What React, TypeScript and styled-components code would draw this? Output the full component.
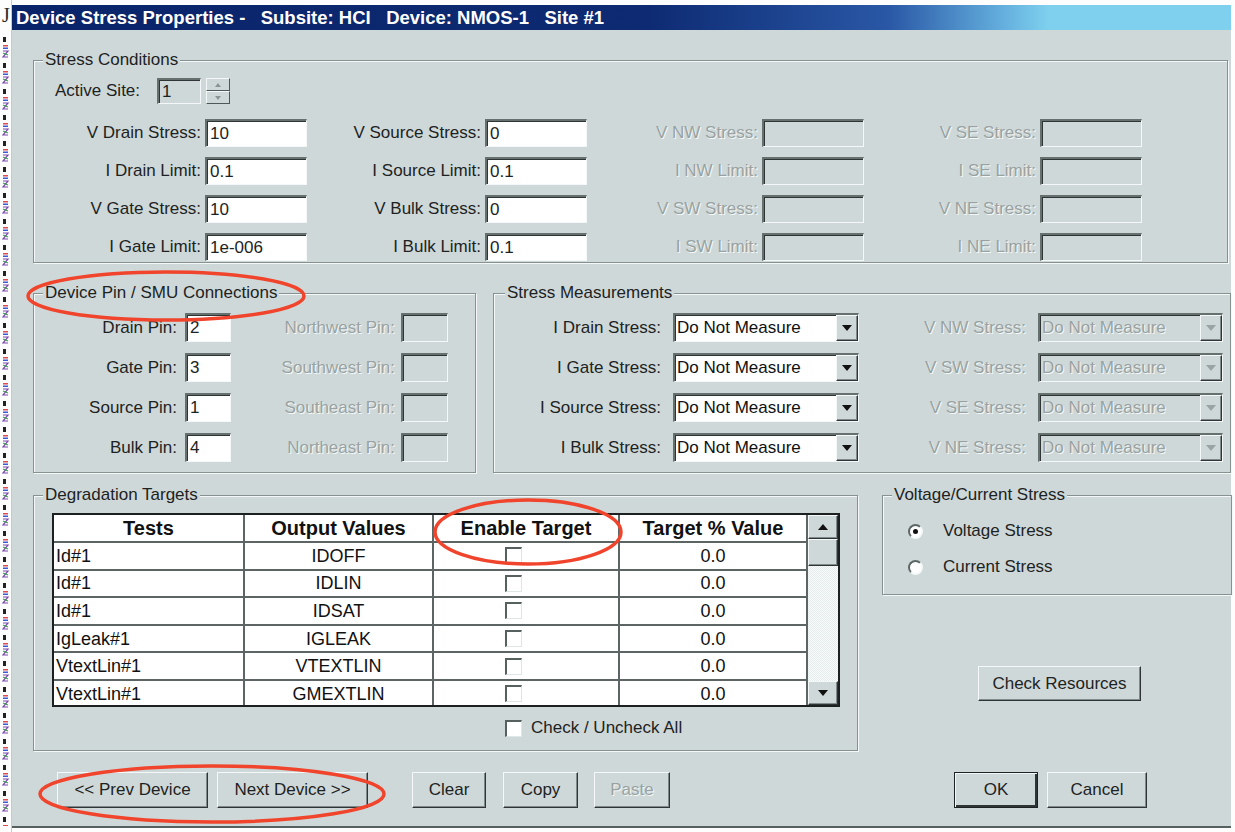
import React from 'react'
import styled, { createGlobalStyle } from 'styled-components'

const FACE = '#cfd8d8'
const TEXT = '#1d2323'
const GREY = '#98a2a2'
const LIGHT = '#f4f8f8'
const DARK = '#4f5858'

const GlobalStyle = createGlobalStyle`
  html, body { margin: 0; padding: 0; background: #fdfdfd; }
  body { font-family: "Liberation Sans", Arial, sans-serif; color: ${TEXT}; }
  * { box-sizing: border-box; }
`

const Page = styled.div`
  position: relative;
  display: flex;
  width: 1235px;
  height: 832px;
  overflow: hidden;
  background: #fdfdfd;
`

const Strip = styled.div`
  width: 12px;
  flex: none;
  display: flex;
  flex-direction: column;
  border-right: 1px solid #c3cbcb;
`

const StripGlyph = styled.div`
  height: 36px;
  padding: 3px 0 0 2px;
  font: 20px "Liberation Serif", serif;
  line-height: 24px;
  color: #2a2a2a;
`

const Window = styled.div`
  width: 1219px;
  height: 823px;
  margin-top: 5px;
  display: flex;
  flex-direction: column;
  border-bottom: 2px solid #56605f;
`

const TitleBar = styled.div`
  height: 25px;
  flex: none;
  padding-left: 4px;
  background: linear-gradient(90deg, #0a246a 0%, #0d2a72 52%, #2a58a6 72%, #62acdc 81%, #7ed0ee 85%, #7ed0ee 100%);
  color: #fff;
  font: bold 18.5px "Liberation Sans", Arial, sans-serif;
  line-height: 25px;
  white-space: pre;
`

const Body = styled.div`
  flex: 1;
  display: flex;
  flex-direction: column;
  padding: 30px 0 0 21px;
  background: ${FACE};
`

const Row = styled.div<{ $top?: number; $gap?: number }>`
  display: flex;
  align-items: flex-start;
  margin-top: ${p => p.$top ?? 0}px;
  gap: ${p => p.$gap ?? 0}px;
`

const Column = styled.div`
  display: flex;
  flex-direction: column;
  align-items: flex-start;
`

const Group = styled.div<{ $w: number; $h: number }>`
  width: ${p => p.$w}px;
  height: ${p => p.$h}px;
  flex: none;
  display: flex;
  flex-direction: column;
  align-items: flex-start;
  border: 1px solid #86928f;
  box-shadow: inset 1px 1px 0 ${LIGHT}, 1px 1px 0 ${LIGHT};
`

const Caption = styled.div<{ $x?: number }>`
  margin: -10px 0 0 ${p => p.$x ?? 9}px;
  padding: 0 2px;
  background: ${FACE};
  font-size: 17px;
  line-height: 18px;
  white-space: nowrap;
`

const Label = styled.div<{ $disabled?: boolean; $pad?: number }>`
  display: flex;
  align-items: center;
  justify-content: flex-end;
  height: 100%;
  padding-right: ${p => p.$pad ?? 0}px;
  font-size: 17px;
  white-space: nowrap;
  color: ${p => (p.$disabled ? GREY : TEXT)};
  text-shadow: ${p => (p.$disabled ? `1px 1px 0 ${LIGHT}` : 'none')};
`

const TextBox = styled.div<{ $disabled?: boolean; $w?: number }>`
  width: ${p => (p.$w ? `${p.$w}px` : '100%')};
  height: 100%;
  display: flex;
  align-items: center;
  padding-left: 3px;
  background: ${p => (p.$disabled ? FACE : '#fff')};
  border-style: solid;
  border-width: 2px 1px 1px 2px;
  border-color: #66706f ${LIGHT} ${LIGHT} #66706f;
  box-shadow: inset 1px 1px 0 #2f3535;
  font-size: 17px;
`

const FieldGrid = styled.div<{ $cols: string; $row: number; $gap: number; $left: number; $top: number; $colGap?: number }>`
  display: grid;
  grid-template-columns: ${p => p.$cols};
  grid-auto-rows: ${p => p.$row}px;
  row-gap: ${p => p.$gap}px;
  column-gap: ${p => p.$colGap ?? 0}px;
  margin: ${p => p.$top}px 0 0 ${p => p.$left}px;
`

const SiteRow = styled.div`
  display: flex;
  align-items: center;
  height: 26px;
  margin: 9px 0 0 21px;
`

const SiteLabel = styled.div`
  width: 102px;
  font-size: 17px;
`

const Spinner = styled.div`
  display: flex;
  flex-direction: column;
  margin-left: 5px;
  height: 26px;
`

const SpinHalf = styled.div`
  width: 24px;
  height: 13px;
  display: flex;
  align-items: center;
  justify-content: center;
  background: ${FACE};
  border: 1px solid;
  border-color: ${LIGHT} ${DARK} ${DARK} ${LIGHT};
`

const SelectBox = styled.div<{ $disabled?: boolean }>`
  height: 100%;
  display: flex;
  align-items: center;
  justify-content: space-between;
  padding-left: 2px;
  background: ${p => (p.$disabled ? FACE : '#fff')};
  border-style: solid;
  border-width: 2px 1px 1px 2px;
  border-color: #66706f ${LIGHT} ${LIGHT} #66706f;
  box-shadow: inset 1px 1px 0 #2f3535;
  font-size: 17px;
  color: ${p => (p.$disabled ? GREY : '#111')};
  text-shadow: ${p => (p.$disabled ? `1px 1px 0 ${LIGHT}` : 'none')};
`

const DropButton = styled.div`
  width: 22px;
  height: 100%;
  display: flex;
  align-items: center;
  justify-content: center;
  background: ${FACE};
  border: 1px solid;
  border-color: ${LIGHT} #2f3535 #2f3535 ${LIGHT};
  box-shadow: inset -1px -1px 0 #808a8a;
`

const Table = styled.div`
  display: flex;
  width: 788px;
  height: 194px;
  margin: 9px 0 0 18px;
  border: 2px solid #1c2020;
  background: #fff;
`

const Cells = styled.div`
  display: grid;
  grid-template-columns: 189px 187px 184px 186px;
  grid-template-rows: 26px;
  grid-auto-rows: 25.6px;
  gap: 2px;
  align-content: start;
  width: 754px;
  height: 100%;
  overflow: hidden;
  background: #5d6464;
  border-right: 2px solid #5d6464;
`

const Cell = styled.div<{ $align?: 'left' | 'center'; $head?: boolean }>`
  display: flex;
  align-items: center;
  justify-content: ${p => (p.$align === 'left' ? 'flex-start' : 'center')};
  padding-left: ${p => (p.$align === 'left' ? 2 : 0)}px;
  background: #fff;
  font-size: ${p => (p.$head ? 20 : 18)}px;
  line-height: 20px;
  font-weight: ${p => (p.$head ? 'bold' : 'normal')};
  color: #111;
  white-space: nowrap;
`

const CheckCell = styled.div`
  display: flex;
  align-items: center;
  padding-left: 71px;
  background: #fff;
`

const Check = styled.div<{ $size?: number }>`
  width: ${p => p.$size ?? 17}px;
  height: ${p => p.$size ?? 17}px;
  background: #fff;
  border-style: solid;
  border-width: 2px 1px 1px 2px;
  border-color: #55605f #dfe6e6 #dfe6e6 #55605f;
`

const Scroll = styled.div`
  width: 30px;
  display: flex;
  flex-direction: column;
  background: repeating-conic-gradient(#e6ecec 0% 25%, #f8fbfb 0% 50%) 0 0 / 2px 2px;
`

const ScrollBtn = styled.div<{ $h: number }>`
  height: ${p => p.$h}px;
  flex: none;
  display: flex;
  align-items: center;
  justify-content: center;
  background: ${FACE};
  border: 1px solid;
  border-color: ${LIGHT} #2f3535 #2f3535 ${LIGHT};
  box-shadow: inset -1px -1px 0 #808a8a;
`

const Spacer = styled.div`
  flex: 1;
`

const CheckAllRow = styled.div`
  display: flex;
  align-items: center;
  gap: 9px;
  height: 18px;
  margin: 12px 0 0 471px;
  font-size: 17px;
`

const RadioRow = styled.div<{ $top: number }>`
  display: flex;
  align-items: center;
  gap: 20px;
  height: 16px;
  margin: ${p => p.$top}px 0 0 25px;
  font-size: 17px;
`

const Radio = styled.div<{ $on?: boolean }>`
  width: 15px;
  height: 15px;
  border-radius: 50%;
  display: flex;
  align-items: center;
  justify-content: center;
  background: #fff;
  border: 2px solid;
  border-color: #5d6766 ${LIGHT} ${LIGHT} #5d6766;
  &::after {
    content: '';
    width: 5px;
    height: 5px;
    border-radius: 50%;
    background: ${p => (p.$on ? '#111' : 'transparent')};
  }
`

const Button = styled.div<{ $w: number; $h?: number; $left?: number; $disabled?: boolean; $default?: boolean }>`
  width: ${p => p.$w}px;
  height: ${p => p.$h ?? 36}px;
  flex: none;
  display: flex;
  align-items: center;
  justify-content: center;
  margin-left: ${p => p.$left ?? 0}px;
  background: ${FACE};
  border: 1px solid;
  border-color: ${p => (p.$default ? '#1d2222' : `${LIGHT} #2f3535 #2f3535 ${LIGHT}`)};
  box-shadow: ${p =>
    p.$default
      ? `inset 1px 1px 0 ${LIGHT}, inset -2px -2px 0 #2f3535`
      : 'inset -1px -1px 0 #808a8a'};
  font-size: 17px;
  white-space: nowrap;
  color: ${p => (p.$disabled ? GREY : TEXT)};
  text-shadow: ${p => (p.$disabled ? `1px 1px 0 ${LIGHT}` : 'none')};
`

const Overlay = styled.svg`
  position: absolute;
  left: 0;
  top: 0;
  pointer-events: none;
`

const Arrow = ({ dir, color = '#111' }: { dir: 'up' | 'down'; color?: string }) => (
  <svg width="10" height="6" viewBox="0 0 10 6">
    <path d={dir === 'up' ? 'M0 6 L5 0 L10 6 Z' : 'M0 0 L10 0 L5 6 Z'} fill={color} />
  </svg>
)

const TinyArrow = ({ dir }: { dir: 'up' | 'down' }) => (
  <svg width="6" height="4" viewBox="0 0 6 4">
    <path d={dir === 'up' ? 'M0 4 L3 0 L6 4 Z' : 'M0 0 L6 0 L3 4 Z'} fill="#8a9494" />
  </svg>
)

const stressRows = [
  ['V Drain Stress:', '10', 'V Source Stress:', '0', 'V NW Stress:', 'V SE Stress:'],
  ['I Drain Limit:', '0.1', 'I Source Limit:', '0.1', 'I NW Limit:', 'I SE Limit:'],
  ['V Gate Stress:', '10', 'V Bulk Stress:', '0', 'V SW Stress:', 'V NE Stress:'],
  ['I Gate Limit:', '1e-006', 'I Bulk Limit:', '0.1', 'I SW Limit:', 'I NE Limit:'],
]

const pinRows = [
  ['Drain Pin:', '2', 'Northwest Pin:'],
  ['Gate Pin:', '3', 'Southwest Pin:'],
  ['Source Pin:', '1', 'Southeast Pin:'],
  ['Bulk Pin:', '4', 'Northeast Pin:'],
]

const measureRows = [
  ['I Drain Stress:', 'V NW Stress:'],
  ['I Gate Stress:', 'V SW Stress:'],
  ['I Source Stress:', 'V SE Stress:'],
  ['I Bulk Stress:', 'V NE Stress:'],
]

const targets = [
  ['Id#1', 'IDOFF'],
  ['Id#1', 'IDLIN'],
  ['Id#1', 'IDSAT'],
  ['IgLeak#1', 'IGLEAK'],
  ['VtextLin#1', 'VTEXTLIN'],
  ['VtextLin#1', 'GMEXTLIN'],
]

const StripIcons = () => (
  <svg width="11" height="790" viewBox="0 0 11 790">
    <defs>
      <pattern id="icons" width="11" height="26" patternUnits="userSpaceOnUse">
        <path d="M3 1 L6 1 L6 6 L3 6 Z" fill="#222" />
        <rect x="3" y="9" width="5" height="1.5" fill="#e04a4a" />
        <rect x="3" y="11.5" width="5" height="1.5" fill="#3a5ad8" />
        <path d="M3 15 L8 15 L3 21 L8 21" stroke="#7a4ab0" strokeWidth="1.2" fill="none" />
        <path d="M3 17 L8 19" stroke="#3aa050" strokeWidth="1.2" />
      </pattern>
    </defs>
    <rect width="11" height="790" fill="url(#icons)" />
  </svg>
)

export default function App() {
  return (
    <Page>
      <GlobalStyle />
      <Strip>
        <StripGlyph>J</StripGlyph>
        <StripIcons />
      </Strip>
      <Window>
        <TitleBar>{'Device Stress Properties -   Subsite: HCI   Device: NMOS-1   Site #1'}</TitleBar>
        <Body>
          <Group $w={1195} $h={203}>
            <Caption $x={9}>Stress Conditions</Caption>
            <SiteRow>
              <SiteLabel>Active Site:</SiteLabel>
              <TextBox $w={44} $disabled>1</TextBox>
              <Spinner>
                <SpinHalf><TinyArrow dir="up" /></SpinHalf>
                <SpinHalf><TinyArrow dir="down" /></SpinHalf>
              </Spinner>
            </SiteRow>
            <FieldGrid $cols="150px 102px 170px 102px 167px 102px 168px 102px" $row={28} $gap={10} $left={17} $top={15} $colGap={4}>
              {stressRows.map(r => (
                <React.Fragment key={r[0]}>
                  <Label>{r[0]}</Label>
                  <TextBox>{r[1]}</TextBox>
                  <Label>{r[2]}</Label>
                  <TextBox>{r[3]}</TextBox>
                  <Label $disabled>{r[4]}</Label>
                  <TextBox $disabled />
                  <Label $disabled>{r[5]}</Label>
                  <TextBox $disabled />
                </React.Fragment>
              ))}
            </FieldGrid>
          </Group>

          <Row $top={30} $gap={17}>
            <Group $w={443} $h={180}>
              <Caption $x={9}>Device Pin / SMU Connections</Caption>
              <FieldGrid $cols="140px 46px 170px 47px" $row={29} $gap={11} $left={11} $top={11}>
                {pinRows.map(r => (
                  <React.Fragment key={r[0]}>
                    <Label $pad={8}>{r[0]}</Label>
                    <TextBox>{r[1]}</TextBox>
                    <Label $disabled $pad={6}>{r[2]}</Label>
                    <TextBox $disabled />
                  </React.Fragment>
                ))}
              </FieldGrid>
            </Group>
            <Group $w={738} $h={180}>
              <Caption $x={11}>Stress Measurements</Caption>
              <FieldGrid $cols="172px 186px 179px 185px" $row={29} $gap={11} $left={7} $top={11}>
                {measureRows.map(r => (
                  <React.Fragment key={r[0]}>
                    <Label $pad={12}>{r[0]}</Label>
                    <SelectBox>
                      Do Not Measure
                      <DropButton><Arrow dir="down" /></DropButton>
                    </SelectBox>
                    <Label $disabled $pad={12}>{r[1]}</Label>
                    <SelectBox $disabled>
                      Do Not Measure
                      <DropButton><Arrow dir="down" color="#9aa4a4" /></DropButton>
                    </SelectBox>
                  </React.Fragment>
                ))}
              </FieldGrid>
            </Group>
          </Row>

          <Row $top={22} $gap={24}>
            <Group $w={825} $h={256}>
              <Caption $x={9}>Degradation Targets</Caption>
              <Table>
                <Cells>
                  <Cell $head>Tests</Cell>
                  <Cell $head>Output Values</Cell>
                  <Cell $head>Enable Target</Cell>
                  <Cell $head>Target % Value</Cell>
                  {targets.map((t, i) => (
                    <React.Fragment key={i}>
                      <Cell $align="left">{t[0]}</Cell>
                      <Cell>{t[1]}</Cell>
                      <CheckCell><Check /></CheckCell>
                      <Cell>0.0</Cell>
                    </React.Fragment>
                  ))}
                </Cells>
                <Scroll>
                  <ScrollBtn $h={24}><Arrow dir="up" /></ScrollBtn>
                  <ScrollBtn $h={27} />
                  <Spacer />
                  <ScrollBtn $h={24}><Arrow dir="down" /></ScrollBtn>
                </Scroll>
              </Table>
              <CheckAllRow>
                <Check />
                Check / Uncheck All
              </CheckAllRow>
            </Group>
            <Column>
              <Group $w={350} $h={100}>
                <Caption $x={9}>Voltage/Current Stress</Caption>
                <RadioRow $top={19}>
                  <Radio $on />
                  Voltage Stress
                </RadioRow>
                <RadioRow $top={20}>
                  <Radio />
                  Current Stress
                </RadioRow>
              </Group>
              <Row $top={71}>
                <Button $w={163} $h={35} $left={96}>Check Resources</Button>
              </Row>
            </Column>
          </Row>

          <Row $top={21}>
            <Button $w={151} $left={24}>{'<< Prev Device'}</Button>
            <Button $w={151} $left={9}>{'Next Device >>'}</Button>
            <Button $w={74} $left={44}>Clear</Button>
            <Button $w={75} $left={17}>Copy</Button>
            <Button $w={76} $left={16} $disabled>Paste</Button>
            <Button $w={84} $left={284} $default>OK</Button>
            <Button $w={100} $left={9}>Cancel</Button>
          </Row>
        </Body>
      </Window>

      <Overlay width="1235" height="832" viewBox="0 0 1235 832">
        <g fill="none" stroke="#f0452c" strokeWidth="3.5">
          <ellipse cx="166" cy="296" rx="138" ry="24" />
          <ellipse cx="528" cy="532" rx="93" ry="32" />
          <ellipse cx="212" cy="794" rx="172" ry="28" />
        </g>
      </Overlay>
    </Page>
  )
}
